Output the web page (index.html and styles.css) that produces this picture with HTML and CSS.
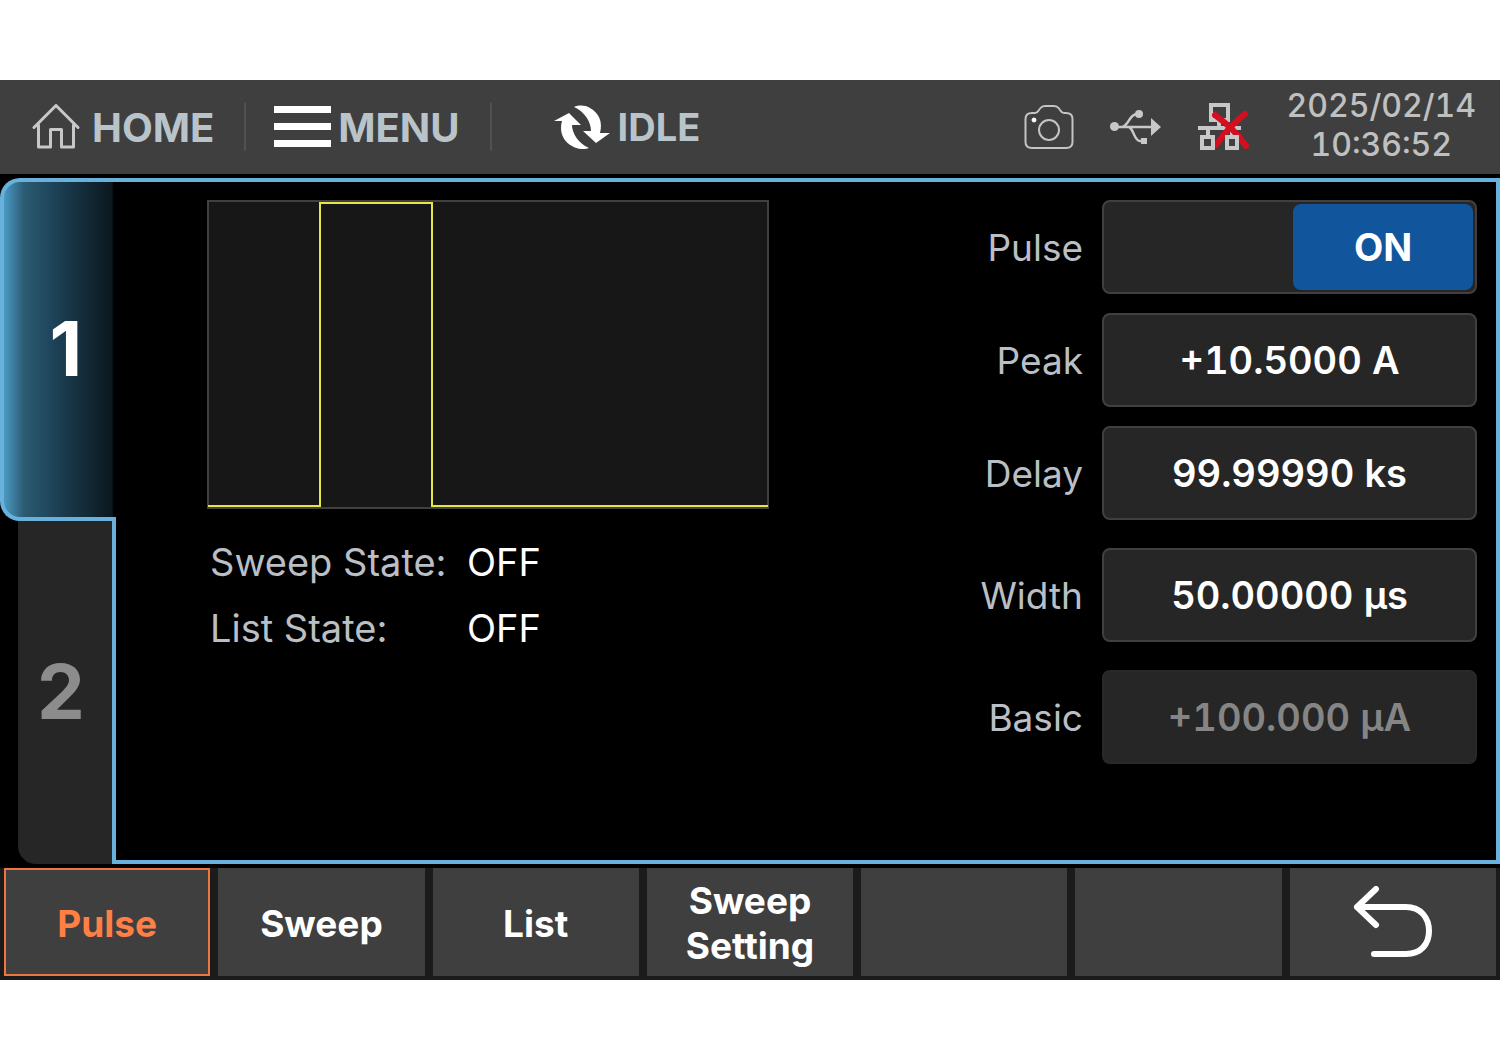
FILE: index.html
```html
<!DOCTYPE html>
<html lang="en">

<head>
    <meta charset="UTF-8" />
    <meta name="viewport" content="width=device-width, initial-scale=1.0" />
    <title>Pulse</title>
    <link rel="stylesheet" href="styles.css">
</head>

<body>
    <div class="screen">
        <header class="topbar">
            <button class="nav-button home" type="button">
                <svg width="48" height="46" viewBox="0 0 48 46" fill="none" stroke="#c8c8c8" stroke-width="3" stroke-linejoin="round" stroke-linecap="round">
                    <path d="M2 23.500L24 1.500L46 23.500M6.500 21V43H18.500V25.500H29.500V43H41.500V21" />
                </svg>
                HOME
            </button>
            <button class="nav-button menu" type="button">
                <svg width="57" height="42" viewBox="0 0 57 42" fill="#ffffff">
                    <path d="M0 0H57V7H0ZM0 17H57V24H0ZM0 34H57V41H0Z" />
                </svg>
                MENU
            </button>
            <div class="run-state">
                <svg width="56" height="44" viewBox="0 0 56 44" fill="#ffffff">
                    <path d="M0 16L15 8L27 20H18C18 28 24 38 35 43C29 45 23 44 18 41C9 36 5 27 8 16Z" />
                    <path d="M56 28L42 38L29 26H37C37 17 31 7 20 2C25 0 31 0 36 3C45 8 49 17 46 28Z" />
                </svg>
                IDLE
            </div>

            <div class="status-icons">
                <svg width="50" height="46" viewBox="0 0 50 46" fill="none" stroke="#c4c4c4" stroke-width="2">
                    <path d="M8 9H11C14 9 14 7 16 4.500C17.500 2.500 19 2 21 2H30C32 2 33.500 2.500 35 4.500C37 7 37 9 40 9H42Q48.500 9 48.500 15V38Q48.500 44 42 44H8Q1.500 44 1.500 38V15Q1.500 9 8 9Z" />
                    <circle cx="25" cy="26" r="10" />
                    <circle cx="10" cy="16" r="2" fill="#ffffff" stroke="#ffffff" stroke-width="1" />
                </svg>
                <svg width="52" height="36" viewBox="0 0 52 36" fill="none" stroke="#c8c8c8" stroke-width="2.500">
                    <path d="M4 18H43M12 18C19 17 19 5 27 5H29M19 18C24 20 24 32 30 32H34" />
                    <path d="M41 9L51 18L41 27Z" fill="#c8c8c8" stroke="none" />
                    <circle cx="4.500" cy="17.500" r="4.500" fill="#c8c8c8" stroke="none" />
                    <circle cx="29" cy="5" r="4" fill="#c8c8c8" stroke="none" />
                    <path d="M31 29H37V35H31Z" fill="#c8c8c8" stroke="none" />
                </svg>
                <svg width="52" height="48" viewBox="0 0 52 48" fill="none">
                    <g stroke="#c8c8c8" stroke-width="4">
                        <path d="M13 2H30V17H13ZM21 17V25M0 25H43M10 25V33M34 25V33" />
                    </g>
                    <path d="M17 12C28 20 40 31 48 43M47 11C37 19 26 30 18 42" stroke="#d50f20" stroke-width="6" stroke-linecap="round" />
                    <g stroke="#c8c8c8" stroke-width="4">
                        <path d="M4 34H15V45H4ZM29 34H39V45H29Z" />
                    </g>
                </svg>
            </div>
            <time class="clock" datetime="2025-02-14T10:36:52">2025/02/14<br>10:36:52</time>
        </header>

        <main class="workspace">
            <nav class="channels">
                <button class="channel active" type="button">1</button>
                <button class="channel" type="button">2</button>
            </nav>

            <div class="panel">
                <section class="overview">
                    <svg class="plot" viewBox="0 0 562 309">
                        <rect x="1" y="1" width="560" height="307" fill="#171717" stroke="#404040" stroke-width="2" />
                        <path d="M1 306H113V3H225V306H561" fill="none" stroke="#e3e645" stroke-width="2" />
                    </svg>
                    <dl class="states">
                        <dt>Sweep State:</dt>
                        <dd>OFF</dd>
                        <dt>List State:</dt>
                        <dd>OFF</dd>
                    </dl>
                </section>

                <form class="settings">
                    <div class="setting">
                        <label for="pulse">Pulse</label>
                        <div class="field switch">
                            <input id="pulse" type="checkbox" checked>
                            <span class="thumb">ON</span>
                        </div>
                    </div>
                    <div class="setting">
                        <label for="peak">Peak</label>
                        <input class="field" id="peak" type="text" value="+10.5000 A">
                    </div>
                    <div class="setting">
                        <label for="delay">Delay</label>
                        <input class="field" id="delay" type="text" value="99.99990 ks">
                    </div>
                    <div class="setting spaced">
                        <label for="width">Width</label>
                        <input class="field" id="width" type="text" value="50.00000 µs">
                    </div>
                    <div class="setting spaced">
                        <label for="basic">Basic</label>
                        <input class="field" id="basic" type="text" value="+100.000 µA" disabled>
                    </div>
                </form>
            </div>
        </main>

        <footer class="softkeys">
            <button class="softkey active" type="button">Pulse</button>
            <button class="softkey" type="button">Sweep</button>
            <button class="softkey" type="button">List</button>
            <button class="softkey" type="button">Sweep<br>Setting</button>
            <button class="softkey" type="button" disabled></button>
            <button class="softkey" type="button" disabled></button>
            <button class="softkey" type="button" aria-label="Back">
                <svg width="80" height="74" viewBox="0 0 80 74" fill="none" stroke="#ffffff" stroke-width="6" stroke-linecap="round" stroke-linejoin="round">
                    <path d="M23 3L4 21L23 39M4 21H53C68 21 76 32 76 45C76 58 68 68 53 68H21" />
                </svg>
            </button>
        </footer>
    </div>
</body>

</html>
```
FILE: styles.css
```css
* {
    box-sizing: border-box;
}

body {
    margin: 0;
    padding: 80px 0;
    background: #ffffff;
    font-family: Inter, 'Liberation Sans', sans-serif;
    font-size: 38px;
    color: #ffffff;
}

button,
input {
    font: inherit;
    color: inherit;
    margin: 0;
    border: 0;
}

svg {
    display: block;
    flex-shrink: 0;
}

.screen {
    background: #000000;
}

/* top bar */
.topbar {
    display: flex;
    align-items: center;
    height: 94px;
    padding: 0 24px 0 32px;
    background: #3f3f3f;
}

.nav-button,
.run-state {
    display: flex;
    align-items: center;
    height: 48px;
    font-weight: 700;
    color: #b9c4ca;
}

.nav-button {
    padding: 0;
    background: none;
    border-right: 2px solid #505050;
    font-size: 40px;
}

.home {
    gap: 12px;
    padding-right: 30px;
}

.menu {
    gap: 7px;
    padding: 0 30px 0 28px;
}

.run-state {
    gap: 8px;
    margin-left: 62px;
}

.status-icons {
    display: flex;
    align-items: center;
    gap: 36px;
    margin-left: auto;
}

.clock {
    margin-left: 36px;
    padding-bottom: 4px;
    font-size: 32px;
    font-weight: 500;
    line-height: 39px;
    font-variant-numeric: tabular-nums;
    text-align: center;
    color: #c0c0c0;
}

/* channel tabs and main panel */
.workspace {
    display: flex;
    padding: 4px 0;
}

.channels {
    display: grid;
    grid-template-rows: 1fr 1fr;
    width: 116px;
}

.channel {
    margin-left: 18px;
    padding: 0 8px 4px 0;
    background: #262626;
    border-right: 4px solid #68b1dd;
    border-radius: 0 0 0 18px;
    font-size: 76px;
    font-weight: 700;
    color: #8c8c8c;
}

.channel.active {
    margin-left: 0;
    padding: 0 0 4px 12px;
    background: linear-gradient(90deg, #4a9ac4 0, #2c5b73 20px, #1d4257 50px, #0b171d 108px, #000000 110px);
    border: 4px solid #68b1dd;
    border-right: 0;
    border-radius: 20px 0 0 20px;
    color: #ffffff;
}

.panel {
    flex: 1;
    display: flex;
    justify-content: space-between;
    padding: 18px 19px 96px 91px;
    border: solid #68b1dd;
    border-width: 4px 4px 4px 0;
}

.plot {
    width: 562px;
}

.states {
    display: grid;
    grid-template-columns: 257px auto;
    margin: 20px 0 0 3px;
    line-height: 66px;
}

.states dt {
    color: #b9bfc4;
}

.states dd {
    margin: 0;
}

/* settings */
.setting {
    display: flex;
    align-items: center;
    justify-content: flex-end;
    gap: 19px;
    margin-bottom: 19px;
}

.setting label {
    font-size: 37px;
    color: #b9bfc4;
}

.setting.spaced {
    margin: 28px 0 0;
}

.field {
    width: 375px;
    height: 94px;
    padding: 0;
    background: #262626;
    border: 2px solid #404040;
    border-radius: 8px;
    font-size: 38px;
    font-weight: 600;
    font-variant-numeric: tabular-nums;
    text-align: center;
}

.field:disabled {
    border-color: #292929;
    color: #858585;
}

.switch {
    position: relative;
    display: flex;
    justify-content: flex-end;
    padding: 2px;
}

.switch input {
    position: absolute;
    inset: 0;
    width: 100%;
    height: 100%;
    opacity: 0;
}

.thumb {
    display: flex;
    align-items: center;
    justify-content: center;
    width: 180px;
    background: #11569c;
    border-radius: 8px;
    font-weight: 700;
}

/* soft keys */
.softkeys {
    display: grid;
    grid-template-columns: repeat(7, 1fr);
    gap: 8px;
    padding: 0 4px 4px;
    background: #1b1b1b;
}

.softkey {
    display: flex;
    align-items: center;
    justify-content: center;
    height: 108px;
    padding: 2px 0 0;
    background: #3f3f3f;
    font-size: 37px;
    font-weight: 700;
    line-height: 45px;
}

.softkey.active {
    border: 2px solid #f0763f;
    color: #ff7f45;
}
```
